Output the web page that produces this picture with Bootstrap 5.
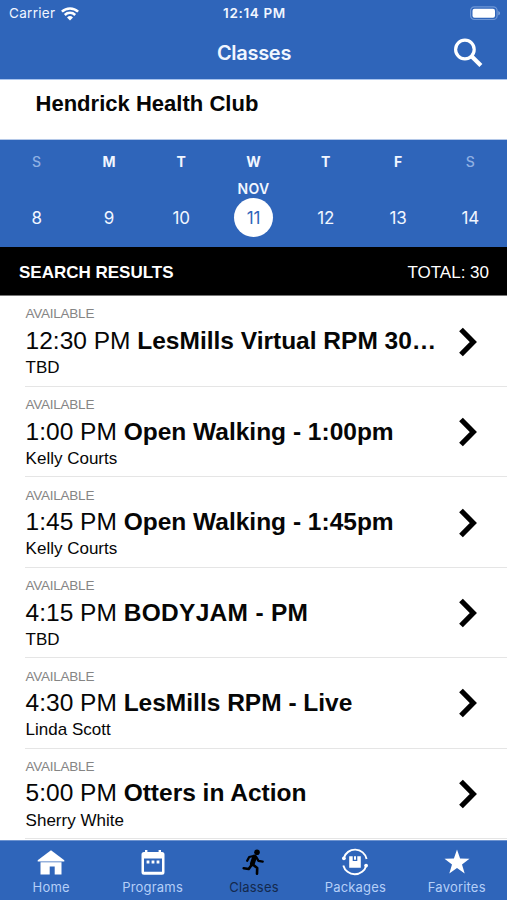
<!DOCTYPE html>
<html lang="en">
<head>
<meta charset="utf-8">
<meta name="viewport" content="width=device-width, initial-scale=1">
<title>Classes</title>
<link href="https://cdn.jsdelivr.net/npm/bootstrap@5.3.0/dist/css/bootstrap.min.css" rel="stylesheet">
<style>
:root{--brand:#2f65ba;--ios:Inter,Roboto,sans-serif;--helv:"Liberation Sans",Arial,sans-serif}
body{height:900px;overflow:hidden;background:#fff;color:#060606;font-family:var(--helv);line-height:1}
svg{display:block;flex:none}
.brand{background:var(--brand);color:#f1f6ff;font-family:var(--ios)}
.thirds{display:grid;grid-template-columns:1fr auto 1fr;align-items:center}
.status{height:27px;padding:0 7px 0 9px;font-size:13.5px}
.status .time{font-weight:600;font-size:13.5px;letter-spacing:.65px}
.status .carrier{letter-spacing:.3px}
.status .carrier svg{margin-left:6px}
.titlebar{height:52px;padding:0 23px 0 24px}
.titlebar h1{font-size:20px;font-weight:600;letter-spacing:-.3px}
.club{height:61px;padding:11px 0 0 35.5px;border-top:1px solid #a9c4ee;border-bottom:1px solid #b4c8e8}
.club h2{font-size:22px;font-weight:700;letter-spacing:.02px}
.week{height:107px;padding:0 .5px}
.day{width:72.3px;padding-top:15px}
.day .dow{font-size:14px;font-weight:700;height:14px}
.day.weekend .dow{font-weight:500;color:#8fb0e3}
.day .mon{font-size:14px;font-weight:600;height:14px;margin-top:13px;letter-spacing:.3px}
.day .num{width:39px;height:39px;margin-top:2px;padding-top:2px;font-size:17px;letter-spacing:-.2px}
.day .num.on{background:#fff;color:var(--brand)}
.results{height:49px;padding:2px 18px 0 19px;background:#000;color:#fff;font-size:17px;border-bottom:1px solid #777}
.slot{height:90.4px;margin-left:25px;padding:1px 30px 0 0;border-bottom:1px solid #e5e5e5}
.slots .slot:first-child{height:91px}
.slot .text{padding-left:.6px}
.slot .avail{font-size:13.5px;color:#858585;height:14px;margin-top:10.4px;letter-spacing:-.25px}
.slot .what{font-size:24.5px;height:26px;margin-top:7.4px;white-space:nowrap}
.slot .who{font-size:17px;height:17px;margin-top:4.2px}
.tabs{height:60px;border-top:1px solid #6d93d0}
.tabs a{width:20%;color:#b5cff8;font-size:13px;padding:7px 0 0 1px;text-decoration:none;letter-spacing:.2px}
.tabs svg{color:#fff;margin-bottom:4.500px}
.tabs a.on{color:#14294d}.tabs a.on svg{color:#000}
</style>
<script src="https://cdn.jsdelivr.net/npm/bootstrap@5.3.0/dist/js/bootstrap.bundle.min.js"></script>
</head>
<body class="d-flex flex-column">
<header class="brand flex-shrink-0">
  <div class="status thirds">
    <div class="carrier d-flex align-items-center"><span>Carrier</span>
      <svg width="18" height="14" viewBox="0 0 18 14" fill="none" stroke="#fff" stroke-width="2.5"><path d="M.9 4.700a11.600 11.600 0 0 1 16.200 0M3.800 8a7.400 7.400 0 0 1 10.400 0"/><path d="M6 10.400a4.400 4.400 0 0 1 6 0l-3 3.200Z" fill="#fff" stroke="none"/></svg>
    </div>
    <div class="time">12:14 PM</div>
    <svg class="ms-auto" width="31" height="15" viewBox="0 0 31 15"><rect x="1.600" y=".8" width="26.500" height="12.700" rx="3.800" fill="none" stroke="#6f97d6" stroke-width="1.200"/><rect x="3.500" y="2.700" width="22.500" height="9" rx="2" fill="#fff"/><path d="M29.400 5c2 .8 2 3.500 0 4.300Z" fill="#87a8dc"/></svg>
  </div>
  <div class="titlebar thirds">
    <span></span><h1 class="m-0">Classes</h1>
    <svg class="ms-auto" width="31" height="31" viewBox="0 0 31 31" fill="none" stroke="#fff"><circle cx="11.900" cy="11.500" r="9.300" stroke-width="3.200"/><path d="m18.300 17.900 9.600 9.600" stroke-width="4.200"/></svg>
  </div>
</header>
<section class="club flex-shrink-0"><h2 class="m-0">Hendrick Health Club</h2></section>
<section class="week brand d-flex flex-shrink-0">
  <div class="day weekend d-flex flex-column align-items-center"><div class="dow">S</div><div class="mon"></div><div class="num d-flex align-items-center justify-content-center">8</div></div>
  <div class="day d-flex flex-column align-items-center"><div class="dow">M</div><div class="mon"></div><div class="num d-flex align-items-center justify-content-center">9</div></div>
  <div class="day d-flex flex-column align-items-center"><div class="dow">T</div><div class="mon"></div><div class="num d-flex align-items-center justify-content-center">10</div></div>
  <div class="day d-flex flex-column align-items-center"><div class="dow">W</div><div class="mon">NOV</div><div class="num on rounded-circle d-flex align-items-center justify-content-center">11</div></div>
  <div class="day d-flex flex-column align-items-center"><div class="dow">T</div><div class="mon"></div><div class="num d-flex align-items-center justify-content-center">12</div></div>
  <div class="day d-flex flex-column align-items-center"><div class="dow">F</div><div class="mon"></div><div class="num d-flex align-items-center justify-content-center">13</div></div>
  <div class="day weekend d-flex flex-column align-items-center"><div class="dow">S</div><div class="mon"></div><div class="num d-flex align-items-center justify-content-center">14</div></div>
</section>
<div class="results d-flex align-items-center justify-content-between flex-shrink-0"><b>SEARCH RESULTS</b><span>TOTAL: 30</span></div>
<main class="slots flex-grow-1 overflow-hidden">
  <div class="slot d-flex justify-content-between align-items-center"><div class="text align-self-start"><div class="avail">AVAILABLE</div><div class="what">12:30 PM <b>LesMills Virtual RPM 30…</b></div><div class="who">TBD</div></div><svg width="18" height="30" viewBox="0 0 18 30" fill="none" stroke="#000" stroke-width="5.200"><path d="m2 2.500 12.300 12.500L2 27.500"/></svg></div>
  <div class="slot d-flex justify-content-between align-items-center"><div class="text align-self-start"><div class="avail">AVAILABLE</div><div class="what">1:00 PM <b>Open Walking - 1:00pm</b></div><div class="who">Kelly Courts</div></div><svg width="18" height="30" viewBox="0 0 18 30" fill="none" stroke="#000" stroke-width="5.200"><path d="m2 2.500 12.300 12.500L2 27.500"/></svg></div>
  <div class="slot d-flex justify-content-between align-items-center"><div class="text align-self-start"><div class="avail">AVAILABLE</div><div class="what">1:45 PM <b>Open Walking - 1:45pm</b></div><div class="who">Kelly Courts</div></div><svg width="18" height="30" viewBox="0 0 18 30" fill="none" stroke="#000" stroke-width="5.200"><path d="m2 2.500 12.300 12.500L2 27.500"/></svg></div>
  <div class="slot d-flex justify-content-between align-items-center"><div class="text align-self-start"><div class="avail">AVAILABLE</div><div class="what">4:15 PM <b style="letter-spacing:.3px">BODYJAM - PM</b></div><div class="who">TBD</div></div><svg width="18" height="30" viewBox="0 0 18 30" fill="none" stroke="#000" stroke-width="5.200"><path d="m2 2.500 12.300 12.500L2 27.500"/></svg></div>
  <div class="slot d-flex justify-content-between align-items-center"><div class="text align-self-start"><div class="avail">AVAILABLE</div><div class="what">4:30 PM <b>LesMills RPM - Live</b></div><div class="who">Linda Scott</div></div><svg width="18" height="30" viewBox="0 0 18 30" fill="none" stroke="#000" stroke-width="5.200"><path d="m2 2.500 12.300 12.500L2 27.500"/></svg></div>
  <div class="slot d-flex justify-content-between align-items-center"><div class="text align-self-start"><div class="avail">AVAILABLE</div><div class="what">5:00 PM <b>Otters in Action</b></div><div class="who">Sherry White</div></div><svg width="18" height="30" viewBox="0 0 18 30" fill="none" stroke="#000" stroke-width="5.200"><path d="m2 2.500 12.300 12.500L2 27.500"/></svg></div>
</main>
<nav class="tabs brand d-flex flex-shrink-0">
  <a href="#" class="d-flex flex-column align-items-center"><svg width="28" height="28" viewBox="0 0 28 28" fill="currentColor"><path d="M14 2.200 27.300 12.300v1.200H.7v-1.200Z"/><path d="M3.500 14.200h21v12.300h-6.800v-8h-5v8H3.500Z"/></svg>Home</a>
  <a href="#" class="d-flex flex-column align-items-center"><svg width="28" height="28" viewBox="0 0 28 28" fill="currentColor"><path fill-rule="evenodd" d="M6 2h2.400v2h11.200V2H22v2h1q2.500 0 2.500 2.500v17.700q0 2.500-2.500 2.500H5q-2.500 0-2.500-2.500V6.500Q2.500 4 5 4h1ZM5 10.600v13.100h18V10.600Z"/><path d="M7.600 12.600h2.800v2.800H7.600Zm5 0h2.800v2.800h-2.800Zm5 0h2.800v2.800h-2.800Z"/></svg>Programs</a>
  <a href="#" class="on d-flex flex-column align-items-center"><svg width="28" height="28" viewBox="0 0 28 28" fill="none" stroke="currentColor" stroke-linecap="round" stroke-linejoin="round"><circle cx="17" cy="4.200" r="2.800" fill="currentColor" stroke="none"/><path d="m14.600 9-2.300 6.700" stroke-width="4.800"/><path d="M13.500 8 9.200 9 7.200 12.700M16.300 9.200l2.200 3.600 4.200.8" stroke-width="2.300"/><path d="m12.800 16.500 4.400 3.500-.2 5.700M11.200 17.400l-2.500 3.600-5-.8" stroke-width="2.600"/></svg>Classes</a>
  <a href="#" class="d-flex flex-column align-items-center"><svg width="28" height="28" viewBox="0 0 28 28" fill="none" stroke="currentColor"><path d="M2.700 10.200A11.800 11.800 0 0 1 25.600 11M2.300 17.500a11.900 11.900 0 0 0 23-.1" stroke-width="1.900"/><circle cx="2.900" cy="10.300" r="1.900" fill="currentColor" stroke="none"/><circle cx="25.100" cy="17.600" r="1.900" fill="currentColor" stroke="none"/><path d="M8.200 8.200h3.500v4.900h4.600V8.200h3.500v11.600H8.200ZM13 8.200h2v3.600h-2Z" fill="currentColor" stroke="none"/></svg>Packages</a>
  <a href="#" class="d-flex flex-column align-items-center"><svg width="28" height="28" viewBox="0 0 28 28" fill="currentColor"><path d="m14 1.600 3.100 8.900 9.400.2-7.500 5.700 2.700 9.100-7.700-5.400-7.700 5.400L9 16.400l-7.500-5.700 9.400-.2Z"/></svg>Favorites</a>
</nav>
</body>
</html>
